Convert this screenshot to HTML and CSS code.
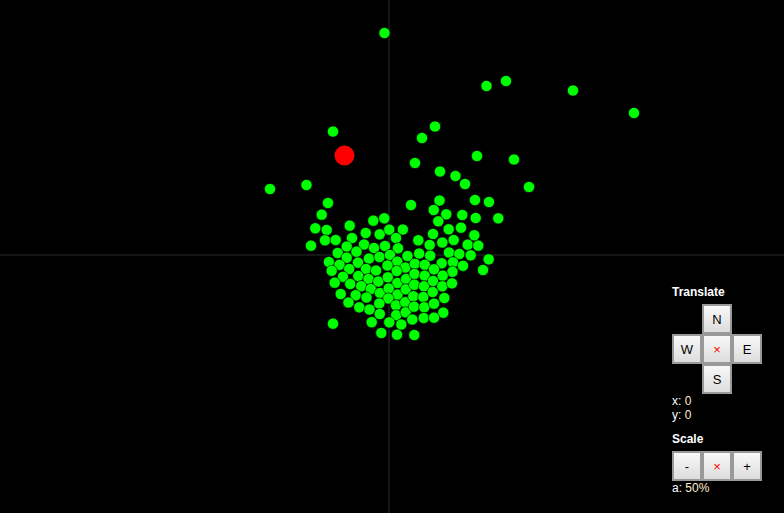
FILE: index.html
```html
<!DOCTYPE html>
<html lang="en">
<head>
    <meta charset="UTF-8">
    <meta name="viewport" content="width=device-width, initial-scale=1.0">
    <title>Force Layout</title>
    <link rel="stylesheet" href="styles.css">
</head>
<body>
    <svg id="plot" class="plot" width="784" height="513"></svg>

    <div class="panel">
        <h4>Translate</h4>
        <div class="pad">
            <button class="pad-n">N</button>
            <button class="pad-w">W</button>
            <button class="pad-c reset">&times;</button>
            <button class="pad-e">E</button>
            <button class="pad-s">S</button>
        </div>
        <div class="readout">x: <span class="value">0</span></div>
        <div class="readout">y: <span class="value">0</span></div>

        <h4 class="scale-title">Scale</h4>
        <div class="row">
            <button>-</button>
            <button class="reset">&times;</button>
            <button>+</button>
        </div>
        <div class="readout">a: <span class="value">50%</span></div>
    </div>

    <script src="plot.js"></script>
</body>
</html>
```

FILE: styles.css
```css
html, body {
    margin: 0;
    padding: 0;
    height: 100%;
    overflow: hidden;
    background-color: #000;
}
body {
    font-family: "Liberation Sans", Arial, sans-serif;
    font-size: 12px;
    color: #fff;
}
.plot {
    display: block;
}
.axis {
    stroke: #2c2c2c;
    stroke-width: 1;
}
.node {
    fill: #00ff00;
    stroke: #000;
    stroke-width: 0.6;
}
.node-active {
    fill: #ff0000;
}
.panel {
    position: absolute;
    left: 672px;
    top: 285px;
    width: 90px;
}
.panel h4 {
    margin: 0 0 5px 0;
    font-size: 12px;
    line-height: 14px;
    font-weight: bold;
}
.panel .scale-title {
    margin-top: 10px;
}
.pad {
    display: grid;
    grid-template-columns: repeat(3, 30px);
    grid-template-rows: repeat(3, 30px);
}
.pad-n { grid-area: 1 / 2; }
.pad-w { grid-area: 2 / 1; }
.pad-c { grid-area: 2 / 2; }
.pad-e { grid-area: 2 / 3; }
.pad-s { grid-area: 3 / 2; }
.row {
    display: flex;
}
button {
    width: 30px;
    height: 30px;
    margin: 0;
    padding: 0;
    font-family: "Liberation Sans", Arial, sans-serif;
    font-size: 13px;
    color: #000;
    background: linear-gradient(#f8f8f8, #dddddd);
    border: 2px solid #999;
    border-radius: 0;
}
button.reset {
    color: #ff0000;
}
.readout {
    line-height: 14px;
}
.value {
    color: #ffeecc;
}
```

FILE: plot.js
```js
const nodes = [
    [384.5,33],[486.5,86],[506,81],[573,90.5],[634,113],[333,131.5],[435,126.5],[422,138],
    [477,156],[514,159.5],[415,163],[440,171.5],[455.5,176],[465,184],[529,187],[270,189],
    [306.5,185],[328,203],[411,205],[439.5,200.5],[475,200],[489,202],
    [321.7,214.7],[315.3,228.3],[326.7,230],[325,240.3],[335.7,240],[311,245.7],[349.7,225.7],
    [373.3,220.7],[384.3,218.3],[365.7,233],[352,238],[379.7,234.3],[389.3,229.7],[402.8,229.5],
    [396,238],[346.7,246.5],[364,244.5],[374,248],[385,246],[398,248.3],[337.7,253],[356.5,251.7],
    [346.7,257.7],[369,258.5],[379.5,257],[390,255],[407.5,256],[328.9,262],[339.5,264.8],[358,262.7],
    [397.3,261.7],[387.5,265.5],[349.2,269],[366,269],[376,270.5],[405.3,267.5],[331.7,270.8],[396.7,271],
    [433.7,210],[446.3,214.3],[462.3,215],[475.7,218],[498.3,218.3],[438.3,221.3],[448.7,229.3],[461,227.7],
    [433,234],[474.3,235.3],[418.3,240.3],[442.3,242.5],[453.7,240],[429.7,245],[467.7,244.7],[478.3,245.7],
    [449,252.5],[459.3,254],[470.7,255.3],[419.2,253.5],[430.2,255.7],[488.7,259.3],[441.7,263.3],[453,262.3],
    [463,265.8],[414.8,263.8],[424.8,264.8],[434,269.3],[452.5,271.7],[483,270],
    [343,276.8],[358.3,276],[368.5,279],[378.3,281.5],[387.8,277.3],[397.3,283],[406,279],[334.7,282.7],
    [350.2,284],[361.2,286.2],[370.8,289],[380,293],[388.7,288.5],[397.5,294.7],[405.8,289.3],[340.7,294],
    [355.7,295.2],[366.5,297.5],[388.3,298.5],[379.3,303.5],[396,305.3],[405.2,302.2],[348.5,302.5],
    [359.3,307.3],[369.5,309.5],[379.8,314],[396.2,315.2],[405.7,312.3],[333,323.7],[371.7,322.2],[389.3,322.3],
    [401.3,324.5],[381.3,333],[397,334.7],[414.5,274],[424.7,275.7],[442.7,275.7],[414.3,284.7],[424,286.3],
    [433,281],[442.3,286.3],[452,283.3],[413.3,296.3],[423.3,297],[432.7,292],[444.3,298],[414,306.7],
    [424.3,307.3],[434,303.7],[443.3,312.7],[412.3,319.5],[423.7,318],[434,317.7],[414.3,335]
];

const svgNS = 'http://www.w3.org/2000/svg';
const plot = document.getElementById('plot');

function addLine(x1, y1, x2, y2) {
    const line = document.createElementNS(svgNS, 'line');
    line.setAttribute('x1', x1);
    line.setAttribute('y1', y1);
    line.setAttribute('x2', x2);
    line.setAttribute('y2', y2);
    line.setAttribute('class', 'axis');
    plot.appendChild(line);
}

function addNode(x, y, r, className) {
    const circle = document.createElementNS(svgNS, 'circle');
    circle.setAttribute('cx', x);
    circle.setAttribute('cy', y);
    circle.setAttribute('r', r);
    circle.setAttribute('class', className);
    plot.appendChild(circle);
}

addLine(0, 255, 784, 255);
addLine(389, 0, 389, 513);

nodes.forEach(n => addNode(n[0], n[1], 5.6, 'node'));
addNode(344.5, 155.5, 10, 'node-active');
```
